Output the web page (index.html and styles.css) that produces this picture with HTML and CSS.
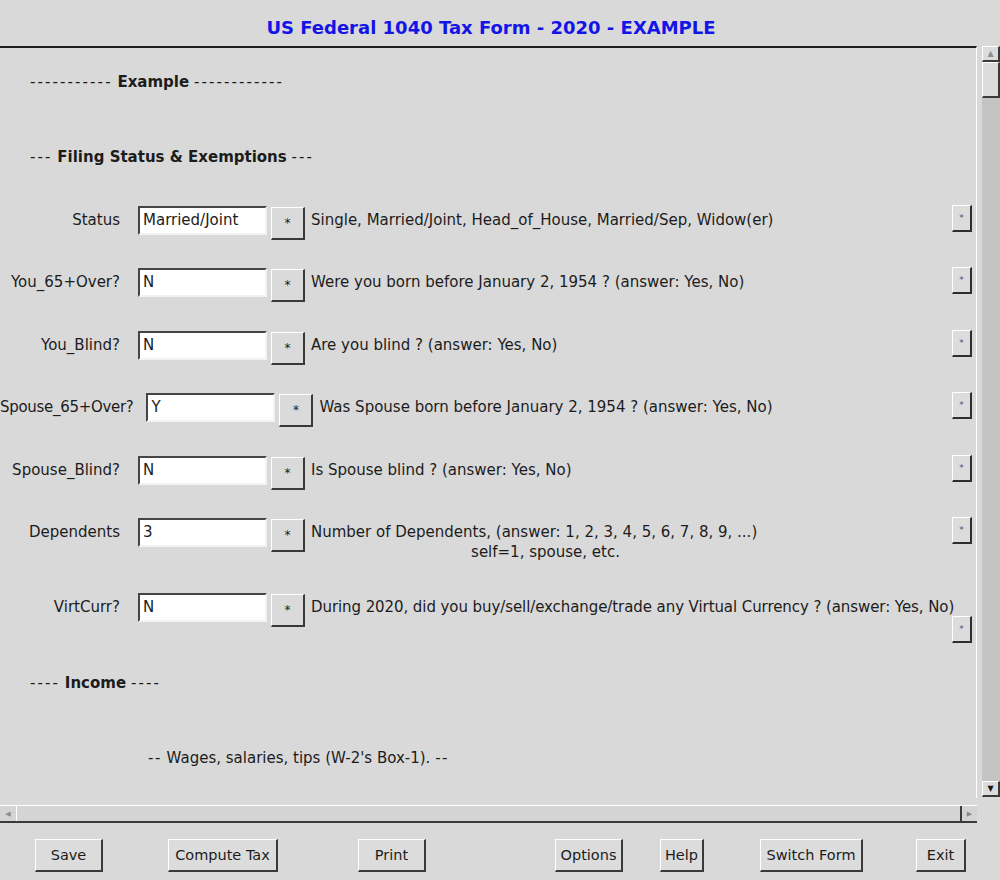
FILE: index.html
```html
<!DOCTYPE html>
<html>
<head>
<meta charset="utf-8">
<title>US Federal 1040 Tax Form - 2020 - EXAMPLE</title>
<link rel="stylesheet" href="styles.css">
</head>
<body>
<div class="app">
  <header class="titlebar">US Federal 1040 Tax Form - 2020 - EXAMPLE</header>
  <div class="body">
    <div class="pane">
      <div class="viewport">
        <div class="heading h-example"><span class="dash">-----------</span> <b>Example</b> <span class="dash">------------</span></div>
        <div class="heading h-filing"><span class="dash">---</span> <b>Filing Status &amp; Exemptions</b> <span class="dash">---</span></div>

        <div class="row r1">
          <div class="label">Status</div>
          <div class="field">Married/Joint</div>
          <div class="star">*</div>
          <div class="desc">Single, Married/Joint, Head_of_House, Married/Sep, Widow(er)</div>
          <div class="mini">*</div>
        </div>
        <div class="row">
          <div class="label">You_65+Over?</div>
          <div class="field">N</div>
          <div class="star">*</div>
          <div class="desc">Were you born before January 2, 1954 ? (answer: Yes, No)</div>
          <div class="mini">*</div>
        </div>
        <div class="row alt">
          <div class="label">You_Blind?</div>
          <div class="field">N</div>
          <div class="star">*</div>
          <div class="desc">Are you blind ? (answer: Yes, No)</div>
          <div class="mini">*</div>
        </div>
        <div class="row">
          <div class="label label-wide">Spouse_65+Over?</div>
          <div class="field">Y</div>
          <div class="star">*</div>
          <div class="desc">Was Spouse born before January 2, 1954 ? (answer: Yes, No)</div>
          <div class="mini">*</div>
        </div>
        <div class="row alt">
          <div class="label">Spouse_Blind?</div>
          <div class="field">N</div>
          <div class="star">*</div>
          <div class="desc">Is Spouse blind ? (answer: Yes, No)</div>
          <div class="mini">*</div>
        </div>
        <div class="row">
          <div class="label">Dependents</div>
          <div class="field">3</div>
          <div class="star">*</div>
          <div class="desc desc-multi">
            <div>Number of Dependents, (answer: 1, 2, 3, 4, 5, 6, 7, 8, 9, ...)</div>
            <div class="sub">self=1, spouse, etc.</div>
          </div>
          <div class="mini">*</div>
        </div>
        <div class="row r7">
          <div class="label">VirtCurr?</div>
          <div class="field">N</div>
          <div class="star">*</div>
          <div class="desc desc-long">During 2020, did you buy/sell/exchange/trade any Virtual Currency ? (answer: Yes, No)</div>
          <div class="mini mini-low">*</div>
        </div>

        <div class="heading h-income"><span class="dash">----</span> <b>Income</b> <span class="dash">----</span></div>
        <div class="note"><span class="dash2">--</span> Wages, salaries, tips (W-2's Box-1). <span class="dash2">--</span></div>
      </div>
      <div class="hscroll">
        <div class="arrow-h">&#9664;</div>
        <div class="htrack"></div>
        <div class="arrow-h">&#9654;</div>
      </div>
    </div>
    <div class="vscroll">
      <div class="arrow-v up">&#9650;</div>
      <div class="thumb"></div>
      <div class="vtrack"></div>
      <div class="arrow-v down">&#9660;</div>
    </div>
  </div>
  <footer class="buttons">
    <div class="btn b-save">Save</div>
    <div class="btn b-compute">Compute Tax</div>
    <div class="btn b-print">Print</div>
    <div class="btn b-options">Options</div>
    <div class="btn b-help">Help</div>
    <div class="btn b-switch">Switch Form</div>
    <div class="btn b-exit">Exit</div>
  </footer>
</div>
</body>
</html>
```
FILE: styles.css
```css
* { box-sizing: border-box; }
html, body {
  margin: 0;
  padding: 0;
  background: #d9d9d9;
}
body {
  font-family: "DejaVu Sans", Verdana, sans-serif;
  font-size: 15px;
  color: #1c1c1c;
}
.app {
  width: 1000px;
  height: 880px;
  display: flex;
  flex-direction: column;
}
.titlebar {
  height: 46px;
  width: 982px;
  display: flex;
  align-items: center;
  justify-content: center;
  padding-top: 8px;
  font-weight: bold;
  font-size: 18px;
  color: #1414e6;
}
.body {
  display: flex;
  height: 778px;
}
.pane {
  width: 977px;
  display: flex;
  flex-direction: column;
}
.viewport {
  height: 752px;
  border-top: 2px solid #1e1e1e;
  border-right: 1px solid #ffffff;
  overflow: hidden;
  display: flex;
  flex-direction: column;
}
.heading {
  height: 20px;
  line-height: 20px;
  padding-left: 30px;
  white-space: pre;
}
.dash { letter-spacing: 2.1px; }
.dash2 { letter-spacing: 1.5px; }
.h-example { margin-top: 24px; }
.h-filing { margin-top: 55px; }
.h-income { margin-top: 30px; }
.note {
  margin-top: 55px;
  padding-left: 148px;
  height: 20px;
  line-height: 20px;
  white-space: nowrap;
}
.row {
  display: flex;
  align-items: flex-start;
  margin-top: 28px;
  min-height: 34px;
}
.row.alt { margin-top: 29px; }
.row.r1 { margin-top: 39px; }
.row.r7 { margin-top: 31px; }
.label {
  min-width: 120px;
  text-align: right;
  line-height: 29px;
  white-space: nowrap;
  flex: none;
}
.label-wide {
  min-width: 0;
  letter-spacing: -0.3px;
  margin-right: -5px;
}
.field {
  margin-left: 18px;
  width: 129px;
  height: 29px;
  line-height: 25px;
  padding-left: 3px;
  background: #ffffff;
  border-top: 2px solid #454545;
  border-left: 2px solid #454545;
  border-bottom: 2px solid #f2f2f2;
  border-right: 2px solid #f2f2f2;
  flex: none;
}
.star {
  margin-left: 4px;
  margin-top: 1px;
  width: 34px;
  height: 33px;
  display: flex;
  align-items: center;
  justify-content: center;
  font-size: 12px;
  background: #dadada;
  border-top: 1px solid #ffffff;
  border-left: 1px solid #ffffff;
  border-right: 2px solid #3a3a3a;
  border-bottom: 2px solid #3a3a3a;
  flex: none;
}
.desc {
  margin-left: 6px;
  padding-top: 4px;
  line-height: 20px;
  white-space: nowrap;
  flex: 1;
  min-width: 0;
}
.desc-long { letter-spacing: -0.08px; }
.desc-multi .sub {
  text-align: center;
  padding-left: 22px;
  width: 447px;
}
.mini {
  flex: none;
  width: 20px;
  height: 27px;
  margin-right: 4px;
  margin-top: -1px;
  display: flex;
  align-items: center;
  justify-content: center;
  font-size: 9px;
  color: #4a4a8a;
  background: #dcdcdc;
  border-top: 1px solid #ffffff;
  border-left: 1px solid #ffffff;
  border-right: 2px solid #2e2e2e;
  border-bottom: 2px solid #2e2e2e;
}
.mini-low { margin-top: 23px; }
.hscroll {
  margin-top: 7px;
  height: 18px;
  display: flex;
  border-top: 1px solid #ffffff;
  border-bottom: 2px solid #3a3a3a;
  background: #d4d4d4;
}
.arrow-h {
  width: 17px;
  display: flex;
  align-items: center;
  justify-content: center;
  font-size: 7px;
  color: #8a8a8a;
  border-right: 1px solid #ffffff;
}
.arrow-h:last-child {
  border-right: none;
  border-left: 2px solid #3a3a3a;
}
.htrack { flex: 1; }
.vscroll {
  margin-left: 5px;
  width: 18px;
  height: 751px;
  display: flex;
  flex-direction: column;
  background: #c4c4c4;
}
.arrow-v {
  height: 16px;
  display: flex;
  align-items: center;
  justify-content: center;
  font-size: 8px;
  background: #dcdcdc;
  border-top: 1px solid #ffffff;
  border-left: 1px solid #ffffff;
  border-right: 2px solid #3a3a3a;
  border-bottom: 2px solid #3a3a3a;
}
.arrow-v.up { color: #909090; }
.arrow-v.down { color: #1a1a1a; }
.thumb {
  height: 36px;
  background: #dcdcdc;
  border-top: 1px solid #ffffff;
  border-left: 1px solid #ffffff;
  border-right: 2px solid #3a3a3a;
  border-bottom: 2px solid #3a3a3a;
}
.vtrack { flex: 1; }
.buttons {
  display: flex;
  align-items: flex-start;
  padding-top: 15px;
}
.btn {
  height: 33px;
  padding: 0 6px;
  display: flex;
  align-items: center;
  justify-content: center;
  background: #dcdcdc;
  border-top: 1px solid #ffffff;
  border-left: 1px solid #ffffff;
  border-right: 2px solid #3a3a3a;
  border-bottom: 2px solid #3a3a3a;
  white-space: nowrap;
  font-size: 14.5px;
}
.b-save { margin-left: 35px; width: 68px; }
.b-compute { margin-left: 65px; width: 110px; }
.b-print { margin-left: 80px; width: 68px; }
.b-options { margin-left: 129px; width: 68px; }
.b-help { margin-left: 37px; width: 44px; }
.b-switch { margin-left: 56px; width: 103px; }
.b-exit { margin-left: 53px; width: 50px; }
```
